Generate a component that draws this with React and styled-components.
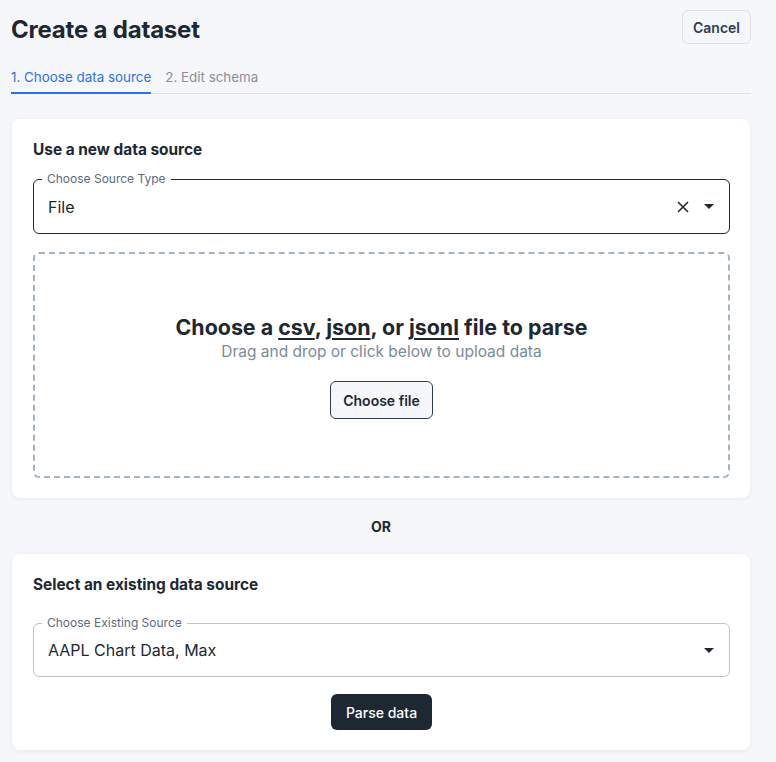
import React from 'react'
import styled, { createGlobalStyle } from 'styled-components'

const GlobalStyle = createGlobalStyle`
  body {
    margin: 0;
    background: #f6f7fa;
    font-family: Inter, "Noto Sans", sans-serif;
    color: #1d2833;
  }
`

const Page = styled.div`
  padding: 10px 25px 12px 11px;
`

const Header = styled.div`
  display: flex;
  justify-content: space-between;
  align-items: center;
  height: 34px;
`

const Title = styled.h1`
  margin: 4px 0 0 0;
  font-size: 24px;
  font-weight: 700;
  letter-spacing: -0.2px;
  color: #1d2833;
`

const GhostButton = styled.button`
  height: 34px;
  padding: 0 10px;
  border: 1px solid #dde1e6;
  border-radius: 6px;
  background: #f6f7fa;
  font-family: inherit;
  font-size: 14px;
  font-weight: 600;
  color: #2d3e50;
`

const Tabs = styled.div`
  display: flex;
  gap: 14px;
  margin-top: 23px;
  border-bottom: 1px solid #dde1e6;
`

const Tab = styled.div`
  font-size: 13.4px;
  line-height: 20px;
  padding-bottom: 5px;
  margin-bottom: -1px;
  color: ${p => (p.active ? '#2f6feb' : '#8a8f96')};
  border-bottom: 2px solid ${p => (p.active ? '#2f6feb' : 'transparent')};
`

const Card = styled.section`
  margin: ${p => p.top}px 1px 0 1px;
  background: #fff;
  border-radius: 8px;
  box-shadow: 0 1px 4px rgba(30, 45, 70, 0.07);
  padding: 21px 20px 20px 21px;
  display: flex;
  flex-direction: column;
`

const CardTitle = styled.h2`
  margin: 0 0 ${p => p.gap}px 0;
  font-size: 15.4px;
  line-height: 20px;
  font-weight: 700;
  color: #1d2833;
`

const Select = styled.div`
  position: relative;
  height: ${p => p.h}px;
  box-sizing: border-box;
  border: 1px solid ${p => (p.focused ? '#1d2833' : '#c4c4c4')};
  border-radius: 6px;
  display: flex;
  align-items: center;
  padding: 0 15px 0 14px;
`

const Legend = styled.span`
  position: absolute;
  top: -8px;
  left: 8px;
  padding: 0 5px;
  background: #fff;
  font-size: 12px;
  line-height: 14px;
  color: #5b6b7b;
`

const Value = styled.span`
  flex: 1;
  font-size: 16px;
  color: #1d2833;
`

const Icons = styled.div`
  display: flex;
  align-items: center;
  gap: 14px;
`

const Dropzone = styled.div`
  margin-top: 18px;
  height: 226px;
  box-sizing: border-box;
  border: 2px dashed #a3b3c0;
  border-radius: 6px;
  display: flex;
  flex-direction: column;
  align-items: center;
  justify-content: center;
  padding-top: 2px;
`

const DropTitle = styled.div`
  font-size: 21.4px;
  line-height: 28px;
  font-weight: 700;
  color: #1d2833;

  u {
    text-decoration-thickness: 2px;
    text-underline-offset: 3px;
  }
`

const DropHint = styled.div`
  font-size: 15.5px;
  line-height: 22px;
  color: #7a8b9a;
`

const OutlineButton = styled.button`
  margin-top: 18px;
  height: 38px;
  padding: 0 12px;
  border: 1px solid #2d3e50;
  border-radius: 6px;
  background: #f5f7fa;
  font-family: inherit;
  font-size: 14px;
  font-weight: 600;
  color: #1d2833;
`

const Or = styled.div`
  height: 56px;
  display: flex;
  align-items: center;
  justify-content: center;
  font-size: 14px;
  font-weight: 700;
  padding-top: 1px;
  box-sizing: border-box;
`

const PrimaryButton = styled.button`
  align-self: center;
  margin-top: 17px;
  height: 36px;
  padding: 0 15px;
  border: none;
  border-radius: 6px;
  background: #1d2833;
  font-family: inherit;
  font-size: 14px;
  font-weight: 500;
  color: #fff;
`

const Clear = () => (
  <svg width="14" height="14" viewBox="0 0 14 14">
    <path d="M2 2 L12 12 M12 2 L2 12" stroke="#1d2833" strokeWidth="1.6" fill="none" />
  </svg>
)

const Caret = () => (
  <svg width="10" height="5" viewBox="0 0 10 5">
    <path d="M0 0 L10 0 L5 5 Z" fill="#1d2833" />
  </svg>
)

export default function App() {
  return (
    <>
      <GlobalStyle />
      <Page>
        <Header>
          <Title>Create a dataset</Title>
          <GhostButton>Cancel</GhostButton>
        </Header>
        <Tabs>
          <Tab active>1. Choose data source</Tab>
          <Tab>2. Edit schema</Tab>
        </Tabs>

        <Card top={25}>
          <CardTitle gap={19}>Use a new data source</CardTitle>
          <Select h={55} focused>
            <Legend>Choose Source Type</Legend>
            <Value>File</Value>
            <Icons>
              <Clear />
              <Caret />
            </Icons>
          </Select>
          <Dropzone>
            <DropTitle>
              Choose a <u>csv</u>, <u>json</u>, or <u>jsonl</u> file to parse
            </DropTitle>
            <DropHint>Drag and drop or click below to upload data</DropHint>
            <OutlineButton>Choose file</OutlineButton>
          </Dropzone>
        </Card>

        <Or>OR</Or>

        <Card top={0}>
          <CardTitle gap={28}>Select an existing data source</CardTitle>
          <Select h={54}>
            <Legend>Choose Existing Source</Legend>
            <Value>AAPL Chart Data, Max</Value>
            <Icons>
              <Caret />
            </Icons>
          </Select>
          <PrimaryButton>Parse data</PrimaryButton>
        </Card>
      </Page>
    </>
  )
}
